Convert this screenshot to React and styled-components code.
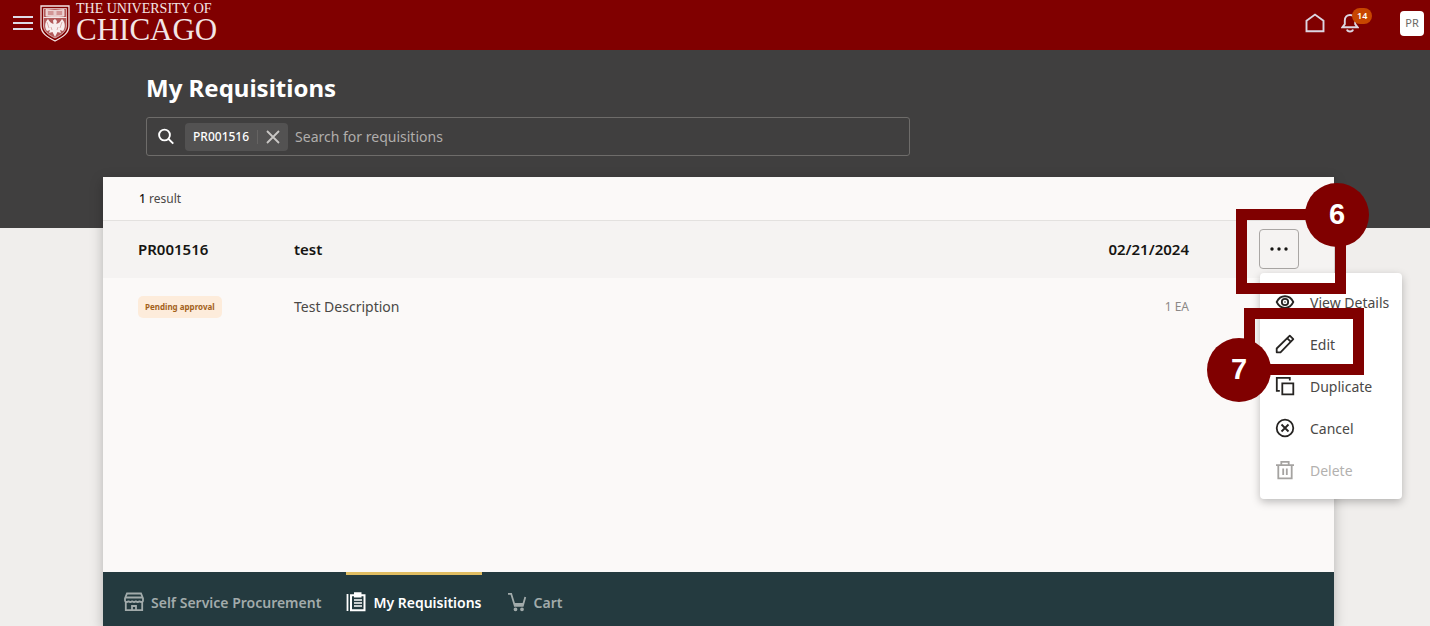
import styled, { createGlobalStyle } from 'styled-components'

const GlobalStyle = createGlobalStyle`
    *{
        box-sizing: border-box;
    }
    body{
        margin: 0;
        background-color: #f0eeec;
        font-family: "Noto Sans", "Open Sans", sans-serif;
        color: #161513;
    }
    button, input{
        font-family: inherit;
    }
    h1, h2, p, ul{
        margin: 0;
        padding: 0;
    }
    ul{
        list-style: none;
    }
`

const StoreIcon = () => (
    <svg width="20" height="20" viewBox="0 0 20 20" fill="none" stroke="currentColor" strokeWidth="1.800">
        <path d="M3 1.500h14l2 5v2c0 2-3.500 2-3.500 0 0 2-3.700 2-3.700 0 0 2-3.600 2-3.600 0 0 2-3.700 2-3.700 0 0 2-3.500 2-3.500 0v-2z" />
        <path d="M1.500 5.500h17M1.800 10v8.200h16.400V10M8 18v-4h4v4" />
    </svg>
)

const ClipboardIcon = () => (
    <svg width="20" height="20" viewBox="0 0 20 20" fill="none" stroke="currentColor">
        <path d="M1.500 2v17" strokeWidth="1.800" />
        <path d="M5 3.300h13.500v14.900H5zM9 1.300h5.500v3.200H9z" strokeWidth="2" />
        <path d="M8 8h8M8 11h8M8 14h8" strokeWidth="1.400" />
    </svg>
)

const CartIcon = () => (
    <svg width="20" height="20" viewBox="0 0 20 20" fill="none" stroke="currentColor" strokeWidth="1.800">
        <path d="M1 1.800h3.200l3.600 12h8L18.300 5M7.300 12h8.500" />
        <circle cx="8.500" cy="17.300" r="1" />
        <circle cx="15" cy="17.300" r="1" />
    </svg>
)

const EyeIcon = () => (
    <svg width="20" height="20" viewBox="0 0 20 20" fill="none" stroke="currentColor" strokeWidth="1.800">
        <path d="M1.700 10C5.300 2.300 14.700 2.300 18.300 10 14.700 17.700 5.300 17.700 1.700 10z" />
        <circle cx="10" cy="10" r="3.200" />
        <circle cx="10" cy="10" r=".8" fill="currentColor" stroke="none" />
    </svg>
)

const PencilIcon = () => (
    <svg width="20" height="20" viewBox="0 0 20 20" fill="none" stroke="currentColor" strokeWidth="1.800" strokeLinejoin="round">
        <path d="M1.700 18.300v-3.800L14.800 1.700l3.500 3.500L5.500 18.300z" />
        <path d="M12.300 4.300l3.400 3.400" />
    </svg>
)

const DuplicateIcon = () => (
    <svg width="20" height="20" viewBox="0 0 20 20" fill="none" stroke="currentColor" strokeWidth="1.800">
        <path d="M7.300 7.300h11v11h-11z" />
        <path d="M14.800 4.500V1.800h-13v13h3" />
    </svg>
)

const CancelIcon = () => (
    <svg width="20" height="20" viewBox="0 0 20 20" fill="none" stroke="currentColor" strokeWidth="1.800">
        <circle cx="10" cy="10" r="8.300" />
        <path d="M6.500 6.500l7 7M13.500 6.500l-7 7" />
    </svg>
)

const TrashIcon = () => (
    <svg width="20" height="20" viewBox="0 0 20 20" fill="none" stroke="currentColor" strokeWidth="1.800">
        <path d="M1 5.200h18M3.300 5.200v13.100h13.400V5.200M6.300 5V1.800h7.400V5M8.200 8.500v6.500M11.800 8.500v6.500" />
    </svg>
)

const SearchIcon = () => (
    <svg width="18" height="18" viewBox="0 0 18 18" fill="none" stroke="currentColor" strokeWidth="1.900">
        <circle cx="7.500" cy="7" r="5.400" />
        <path d="M11.300 10.800l5 4.800" />
    </svg>
)

const Shield = () => (
    <svg width="30" height="38" viewBox="0 0 30 38" fill="none" stroke="#f3e5e5">
        <path d="M1 2h28v20c0 7-6 11-14 15C7 33 1 29 1 22z" strokeWidth="1.300" />
        <path d="M3.500 4.500h23V22c0 5-5 9-11.500 12C8.500 31 3.500 27 3.500 22z" strokeWidth=".7" fill="#b25a5a" />
        <path d="M3.500 13.500h23" strokeWidth="1" />
        <path d="M6 5.500l9 1 9-1v6.500l-9 .8-9-.8z" fill="#e8c9c9" strokeWidth=".8" />
        <path d="M8 8h5.500M16.500 8H22M8 10h5.500M16.500 10H22" stroke="#a33" strokeWidth=".7" />
        <path d="M15 15l2 2-.7 3c3-.5 4-2.500 5.700-5 3 3 4 8 1 12l-3-1 1 3-3.500-1L15 33l-2.500-5L9 29l1-3-3 1c-3-4-2-9 1-12 1.500 2.500 3 4.500 5.500 5l-.5-3.500z" fill="#f8eeee" stroke="none" />
        <path d="M7 18l2 6M22 18l-2 6M11 23l1 3M18 23l-1 3" stroke="#c98080" strokeWidth=".6" />
    </svg>
)

const menuItems = [
    { label: 'View Details', icon: <EyeIcon /> },
    { label: 'Edit', icon: <PencilIcon /> },
    { label: 'Duplicate', icon: <DuplicateIcon /> },
    { label: 'Cancel', icon: <CancelIcon /> },
    { label: 'Delete', icon: <TrashIcon />, disabled: true },
]

const App = () => {
    return (
        <Page>
            <GlobalStyle />
            <TopBar>
                <IconButton aria-label="Navigation menu">
                    <svg width="20" height="14" viewBox="0 0 20 14" stroke="#dedbe6" strokeWidth="2">
                        <path d="M0 1h20M0 7h20M0 13h20" />
                    </svg>
                </IconButton>
                <Brand href="#">
                    <Shield />
                    <BrandText>
                        <span className="small">THE UNIVERSITY OF</span>
                        <span className="large">CHICAGO</span>
                    </BrandText>
                </Brand>
                <TopActions>
                    <IconButton aria-label="Home">
                        <svg width="20" height="20" viewBox="0 0 20 20" fill="none" stroke="#dcd6e2" strokeWidth="1.900">
                            <path d="M1.500 7.800L10 1.600l8.500 6.200v10.400h-17z" />
                        </svg>
                    </IconButton>
                    <IconButton aria-label="Notifications">
                        <svg width="18" height="20" viewBox="0 0 18 20" fill="none" stroke="#dcd6e2" strokeWidth="1.900">
                            <path d="M1.500 14.200h15l-2.300-3V7.500C14.200 4 12 2 9 2S3.800 4 3.800 7.500v3.700z" />
                            <path d="M6 16.500c.6 2.600 5.400 2.600 6 0" />
                        </svg>
                        <Count>14</Count>
                    </IconButton>
                    <Avatar>PR</Avatar>
                </TopActions>
            </TopBar>

            <Hero>
                <h1>My Requisitions</h1>
                <SearchBox>
                    <SearchIcon />
                    <Chip>
                        <span>PR001516</span>
                        <button aria-label="Remove PR001516">
                            <svg width="14" height="14" viewBox="0 0 14 14" stroke="#c9c7c5" strokeWidth="1.800">
                                <path d="M1 1l12 12M13 1L1 13" />
                            </svg>
                        </button>
                    </Chip>
                    <input type="text" aria-label="Search for requisitions" placeholder="Search for requisitions" />
                </SearchBox>
            </Hero>

            <Panel>
                <ResultCount><b>1</b> result</ResultCount>
                <ul>
                    <li>
                        <Row $heading>
                            <h2>PR001516</h2>
                            <h2>test</h2>
                            <h2>02/21/2024</h2>
                            <Actions>
                                <MoreButton aria-label="Actions" aria-expanded="true">
                                    <svg width="20" height="4" viewBox="0 0 20 4" fill="#161513">
                                        <circle cx="3" cy="2" r="1.700" />
                                        <circle cx="10" cy="2" r="1.700" />
                                        <circle cx="17" cy="2" r="1.700" />
                                    </svg>
                                </MoreButton>
                                <Menu>
                                    {menuItems.map(({ label, icon, disabled }) => (
                                        <MenuItem key={label} disabled={disabled}>
                                            {icon}
                                            {label}
                                        </MenuItem>
                                    ))}
                                </Menu>
                                <Frame $top={-20} $left={-23} $width={110} $height={85} />
                                <Step $top={-46} $left={46}>6</Step>
                                <Frame $top={79} $left={-15} $width={120} $height={67} />
                                <Step $top={109} $left={-52}>7</Step>
                            </Actions>
                        </Row>
                        <Row>
                            <div><Badge>Pending approval</Badge></div>
                            <p>Test Description</p>
                            <Quantity>1 EA</Quantity>
                        </Row>
                    </li>
                </ul>
                <BottomNav>
                    <NavLink href="#"><StoreIcon />Self Service Procurement</NavLink>
                    <NavLink href="#" $active><ClipboardIcon />My Requisitions</NavLink>
                    <NavLink href="#"><CartIcon />Cart</NavLink>
                </BottomNav>
            </Panel>
        </Page>
    )
}

const Page = styled.div`
    min-height: 100vh;
    display: flex;
    flex-direction: column;
`

const TopBar = styled.header`
    height: 50px;
    padding: 0 6px 4px 13px;
    display: flex;
    align-items: center;
    background-color: #800000;
`

const IconButton = styled.button`
    position: relative;
    display: flex;
    padding: 0;
    border: none;
    background: none;
    cursor: pointer;
`

const Brand = styled.a`
    display: flex;
    align-items: center;
    gap: 6px;
    margin-left: 7px;
    text-decoration: none;
`

const BrandText = styled.span`
    display: flex;
    flex-direction: column;
    font-family: "Liberation Serif", serif;
    color: #f3e5e5;
    .small{
        font-size: 14px;
        line-height: 14px;
    }
    .large{
        font-size: 31px;
        line-height: 28px;
    }
`

const TopActions = styled.div`
    margin-left: auto;
    display: flex;
    align-items: center;
    gap: 16px;
`

const Count = styled.span`
    position: absolute;
    top: -5px;
    left: 11px;
    padding: 0 5px;
    border-radius: 8px;
    background-color: #c74600;
    color: #fff;
    font-size: 9px;
    font-weight: 600;
    line-height: 16px;
`

const Avatar = styled.span`
    width: 24px;
    height: 25px;
    margin-left: 25px;
    border-radius: 4px;
    background-color: #fff;
    color: #6b6966;
    font-size: 11px;
    line-height: 24px;
    text-align: center;
`

const Hero = styled.section`
    padding: 20px 90px 72px 146px;
    background-color: #403f3f;
    h1{
        color: #fff;
        font-size: 24px;
        font-weight: 700;
        line-height: 36px;
    }
`

const SearchBox = styled.div`
    display: flex;
    align-items: center;
    width: 64%;
    height: 39px;
    margin-top: 11px;
    padding-left: 10px;
    border: 1px solid #6e6c6a;
    border-radius: 3px;
    color: #fff;
    input{
        flex: 1;
        padding: 0 7px;
        border: none;
        outline: none;
        background: none;
        color: #fff;
        font-size: 14px;
    }
    input::placeholder{
        color: #b0aeac;
        opacity: 1;
    }
`

const Chip = styled.span`
    display: flex;
    align-items: center;
    height: 28px;
    margin-left: 10px;
    padding: 0 8px;
    border-radius: 4px;
    background-color: #535252;
    font-size: 12px;
    font-weight: 500;
    button{
        display: flex;
        margin-left: 8px;
        padding: 0 0 0 8px;
        border: none;
        border-left: 1px solid #656362;
        background: none;
        cursor: pointer;
    }
`

const Panel = styled.main`
    flex: 1;
    display: flex;
    flex-direction: column;
    margin: -51px 96px 0 103px;
    background-color: #fbf9f8;
    box-shadow: 0 4px 12px rgba(0, 0, 0, .25);
`

const ResultCount = styled.p`
    padding: 0 36px;
    border-bottom: 1px solid #e3e1df;
    color: #4a4846;
    font-size: 12px;
    line-height: 43px;
    b{
        font-weight: 500;
        color: #161513;
    }
`

const Row = styled.div`
    display: grid;
    grid-template-columns: 156px 1fr 200px 110px;
    align-items: center;
    height: 57px;
    padding: 0 35px 1px;
    background-color: ${({ $heading }) => ($heading ? '#f5f3f2' : 'transparent')};
    color: #4a4846;
    font-size: 14px;
    h2{
        color: #161513;
        font-size: 15px;
        font-weight: 600;
    }
    h2:nth-of-type(3){
        text-align: right;
    }
`

const Badge = styled.span`
    display: inline-block;
    padding: 0 7px;
    border-radius: 5px;
    background-color: #fdecdb;
    color: #a3611a;
    font-size: 8px;
    font-weight: 700;
    line-height: 22px;
`

const Quantity = styled.p`
    color: #8b8886;
    font-size: 12px;
    text-align: right;
`

const Actions = styled.div`
    position: relative;
    justify-self: end;
`

const MoreButton = styled.button`
    display: flex;
    align-items: center;
    justify-content: center;
    width: 40px;
    height: 40px;
    padding: 0;
    border: 1px solid #a9a6a4;
    border-radius: 4px;
    background: none;
    cursor: pointer;
`

const Menu = styled.div`
    position: absolute;
    top: 44px;
    left: 1px;
    z-index: 1;
    padding: 8px 0;
    border-radius: 4px;
    background-color: #fff;
    box-shadow: 0 3px 8px rgba(0, 0, 0, .25);
`

const MenuItem = styled.button`
    display: flex;
    align-items: center;
    gap: 15px;
    width: 142px;
    height: 42px;
    padding: 0 0 0 15px;
    border: none;
    background: none;
    color: ${({ disabled }) => (disabled ? '#b3b1af' : '#4a4846')};
    font-size: 14px;
    white-space: nowrap;
    cursor: pointer;
    svg{
        flex-shrink: 0;
        color: ${({ disabled }) => (disabled ? '#a5a3a1' : '#262422')};
    }
`

// callouts float over the list and the menu
const Frame = styled.span`
    position: absolute;
    z-index: 2;
    top: ${({ $top }) => $top}px;
    left: ${({ $left }) => $left}px;
    width: ${({ $width }) => $width}px;
    height: ${({ $height }) => $height}px;
    border: 11px solid #800000;
    pointer-events: none;
`

const Step = styled.span`
    position: absolute;
    z-index: 3;
    top: ${({ $top }) => $top}px;
    left: ${({ $left }) => $left}px;
    width: 64px;
    height: 64px;
    border-radius: 50%;
    background-color: #800000;
    color: #fff;
    font-family: "Liberation Sans", sans-serif;
    font-size: 29px;
    font-weight: 700;
    line-height: 62px;
    text-align: center;
`

const BottomNav = styled.nav`
    display: flex;
    gap: 25px;
    margin-top: auto;
    padding: 0 21px;
    background-color: #243a3f;
`

const NavLink = styled.a`
    display: flex;
    align-items: center;
    gap: 7px;
    height: 54px;
    padding-top: 3px;
    border-top: 3px solid ${({ $active }) => ($active ? '#e0bd62' : 'transparent')};
    color: ${({ $active }) => ($active ? '#fff' : '#a2abab')};
    font-size: 14px;
    font-weight: 600;
    text-decoration: none;
`

export default App;
